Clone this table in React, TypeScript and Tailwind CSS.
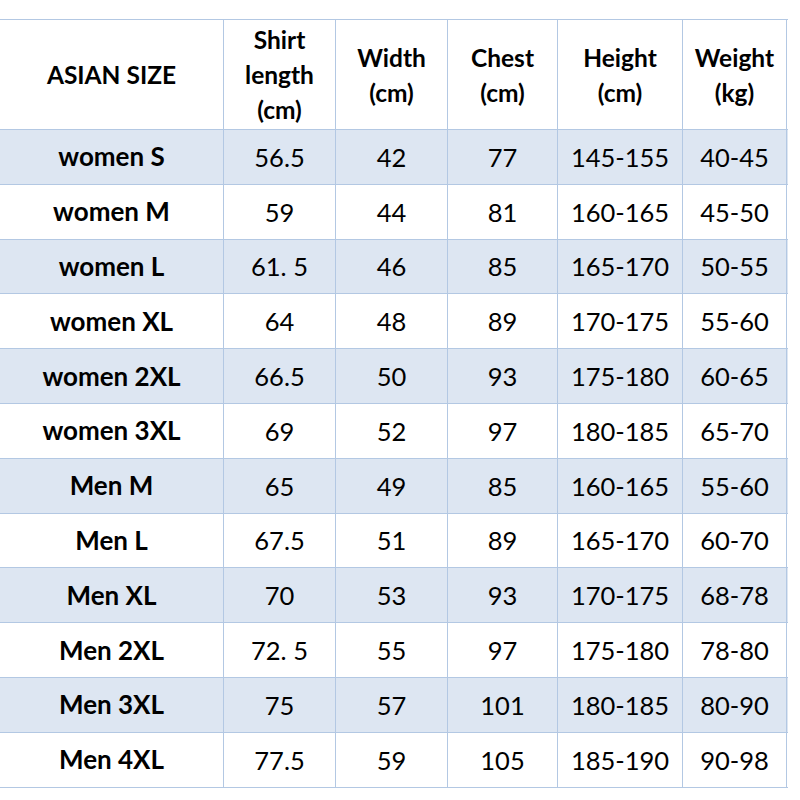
import React from "react";

const headers = [
  ["ASIAN SIZE"],
  ["Shirt", "length", "(cm)"],
  ["Width", "(cm)"],
  ["Chest", "(cm)"],
  ["Height", "(cm)"],
  ["Weight", "(kg)"],
];

const rows = [
  ["women S", "56.5", "42", "77", "145-155", "40-45"],
  ["women M", "59", "44", "81", "160-165", "45-50"],
  ["women L", "61. 5", "46", "85", "165-170", "50-55"],
  ["women XL", "64", "48", "89", "170-175", "55-60"],
  ["women 2XL", "66.5", "50", "93", "175-180", "60-65"],
  ["women 3XL", "69", "52", "97", "180-185", "65-70"],
  ["Men M", "65", "49", "85", "160-165", "55-60"],
  ["Men L", "67.5", "51", "89", "165-170", "60-70"],
  ["Men XL", "70", "53", "93", "170-175", "68-78"],
  ["Men 2XL", "72. 5", "55", "97", "175-180", "78-80"],
  ["Men 3XL", "75", "57", "101", "180-185", "80-90"],
  ["Men 4XL", "77.5", "59", "105", "185-190", "90-98"],
];

const cols = "grid grid-cols-[223px_112px_112px_110px_125px_105px]";

export default function App() {
  return (
    <div className="w-[800px] h-[800px] bg-white pt-[19px] [font-family:Lato,'Open_Sans',sans-serif] text-black">
      <div className="w-[788px] border-t border-b border-[#b3c8e3]">
        {/* Header */}
        <div className={`${cols} h-[109px]`}>
          {headers.map((lines, i) => (
            <div
              key={i}
              className={`flex flex-col items-center justify-center font-bold text-[24.5px] leading-[35px] ${
                i > 0 ? "border-l border-[#b3c8e3]" : ""
              } ${i === 5 ? "border-r" : ""}`}
            >
              {lines.map((l) => (
                <span key={l}>{l}</span>
              ))}
            </div>
          ))}
        </div>

        {/* Body rows */}
        {rows.map((row, r) => (
          <div
            key={r}
            className={`${cols} h-[54.8px] border-t border-[#b3c8e3] ${
              r % 2 === 0 ? "bg-[#dde6f2]" : "bg-white"
            }`}
          >
            {row.map((cell, c) => (
              <div
                key={c}
                className={`flex items-center justify-center ${
                  c === 0 ? "font-bold text-[26px]" : "text-[25.5px]"
                } ${c > 0 ? "border-l border-[#b3c8e3]" : ""} ${
                  c === 5 ? "border-r" : ""
                }`}
              >
                {cell}
              </div>
            ))}
          </div>
        ))}
      </div>
    </div>
  );
}
